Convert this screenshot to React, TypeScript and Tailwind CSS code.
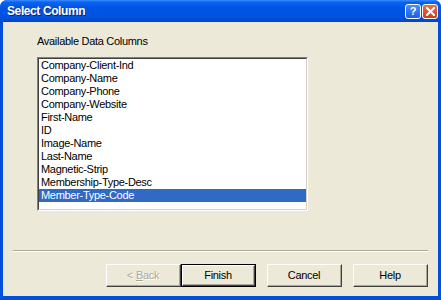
const items = [
  "Company-Client-Ind",
  "Company-Name",
  "Company-Phone",
  "Company-Website",
  "First-Name",
  "ID",
  "Image-Name",
  "Last-Name",
  "Magnetic-Strip",
  "Membership-Type-Desc",
  "Member-Type-Code",
];

const font = "font-['Liberation_Sans',Arial,sans-serif]";

const XpButton = ({
  children,
  primary,
  disabled,
}: {
  children: React.ReactNode;
  primary?: boolean;
  disabled?: boolean;
}) => (
  <div
    className={`w-[75px] h-[23px] ${
      primary ? "border border-black" : ""
    }`}
  >
    <div className="w-full h-full border-t border-l border-white border-b border-r border-b-[#404040] border-r-[#404040]">
      <div
        className={`w-full h-full flex items-center justify-center border-b border-r border-[#aca899] text-[11px] tracking-[-0.3px] ${
          disabled
            ? "text-[#aca899] [text-shadow:1px_1px_#ffffff]"
            : "text-black"
        }`}
      >
        {children}
      </div>
    </div>
  </div>
);

const SelectColumn = () => {
  const selected = "Member-Type-Code";

  return (
    <div
      className={`w-[441px] h-[300px] flex flex-col bg-[#0050dc] rounded-t-[7px] overflow-hidden ${font}`}
    >
      {/* title bar */}
      <div className="h-[22px] flex items-center justify-between pl-[7px] pr-[3px] bg-[linear-gradient(to_bottom,#3b8fff_0%,#0c62f0_10%,#0055e5_35%,#0052e0_75%,#0046cc_100%)]">
        <span className="text-white font-bold text-[12px] [text-shadow:1px_1px_#0a1f7a] tracking-[-0.4px]">
          Select Column
        </span>
        <div className="flex gap-[1px]">
          <div className="w-[16px] h-[15px] rounded-[3px] border border-white bg-[linear-gradient(to_bottom,#4a8cff,#1a5ee8)] flex items-center justify-center text-white font-bold text-[11px] leading-none">
            ?
          </div>
          <div className="w-[16px] h-[15px] rounded-[3px] border border-white bg-[linear-gradient(to_bottom,#e8704f,#d03c18)] flex items-center justify-center">
            <svg width="9" height="9" viewBox="0 0 9 9">
              <path
                d="M1 1 L8 8 M8 1 L1 8"
                stroke="white"
                strokeWidth="2"
                strokeLinecap="square"
              />
            </svg>
          </div>
        </div>
      </div>

      {/* body */}
      <div className="flex-1 mx-[3px] mb-[4px] bg-[#ece9d8] flex flex-col px-[10px]">
        <div className="ml-[24px] mt-[13px] text-[11px] leading-[13px] tracking-[-0.3px] text-black">
          Available Data Columns
        </div>

        <div className="ml-[24px] mt-[9px] w-[271px] h-[154px] border-t border-l border-[#808080] border-b border-r border-b-white border-r-white">
          <div className="w-full h-full border-t border-l border-[#404040] border-b border-r border-b-[#d4d0c8] border-r-[#d4d0c8] bg-white flex flex-col">
            {items.map((item) => (
              <div
                key={item}
                className={`h-[13px] pl-[2px] text-[11px] leading-[13px] tracking-[-0.3px] ${
                  item === selected
                    ? "bg-[#316ac5] text-white"
                    : "text-black"
                }`}
              >
                {item}
              </div>
            ))}
          </div>
        </div>

        <div className="mt-[39px] border-t border-[#aca899] border-b border-b-white" />

        <div className="mt-[12px] flex justify-end">
          <XpButton disabled>
            &lt; <u className="ml-[3px]">B</u>ack
          </XpButton>
          <XpButton primary>Finish</XpButton>
          <div className="ml-[11px]">
            <XpButton>Cancel</XpButton>
          </div>
          <div className="ml-[11px]">
            <XpButton>Help</XpButton>
          </div>
        </div>
      </div>
    </div>
  );
};

export default function App() {
  return <SelectColumn />;
}
